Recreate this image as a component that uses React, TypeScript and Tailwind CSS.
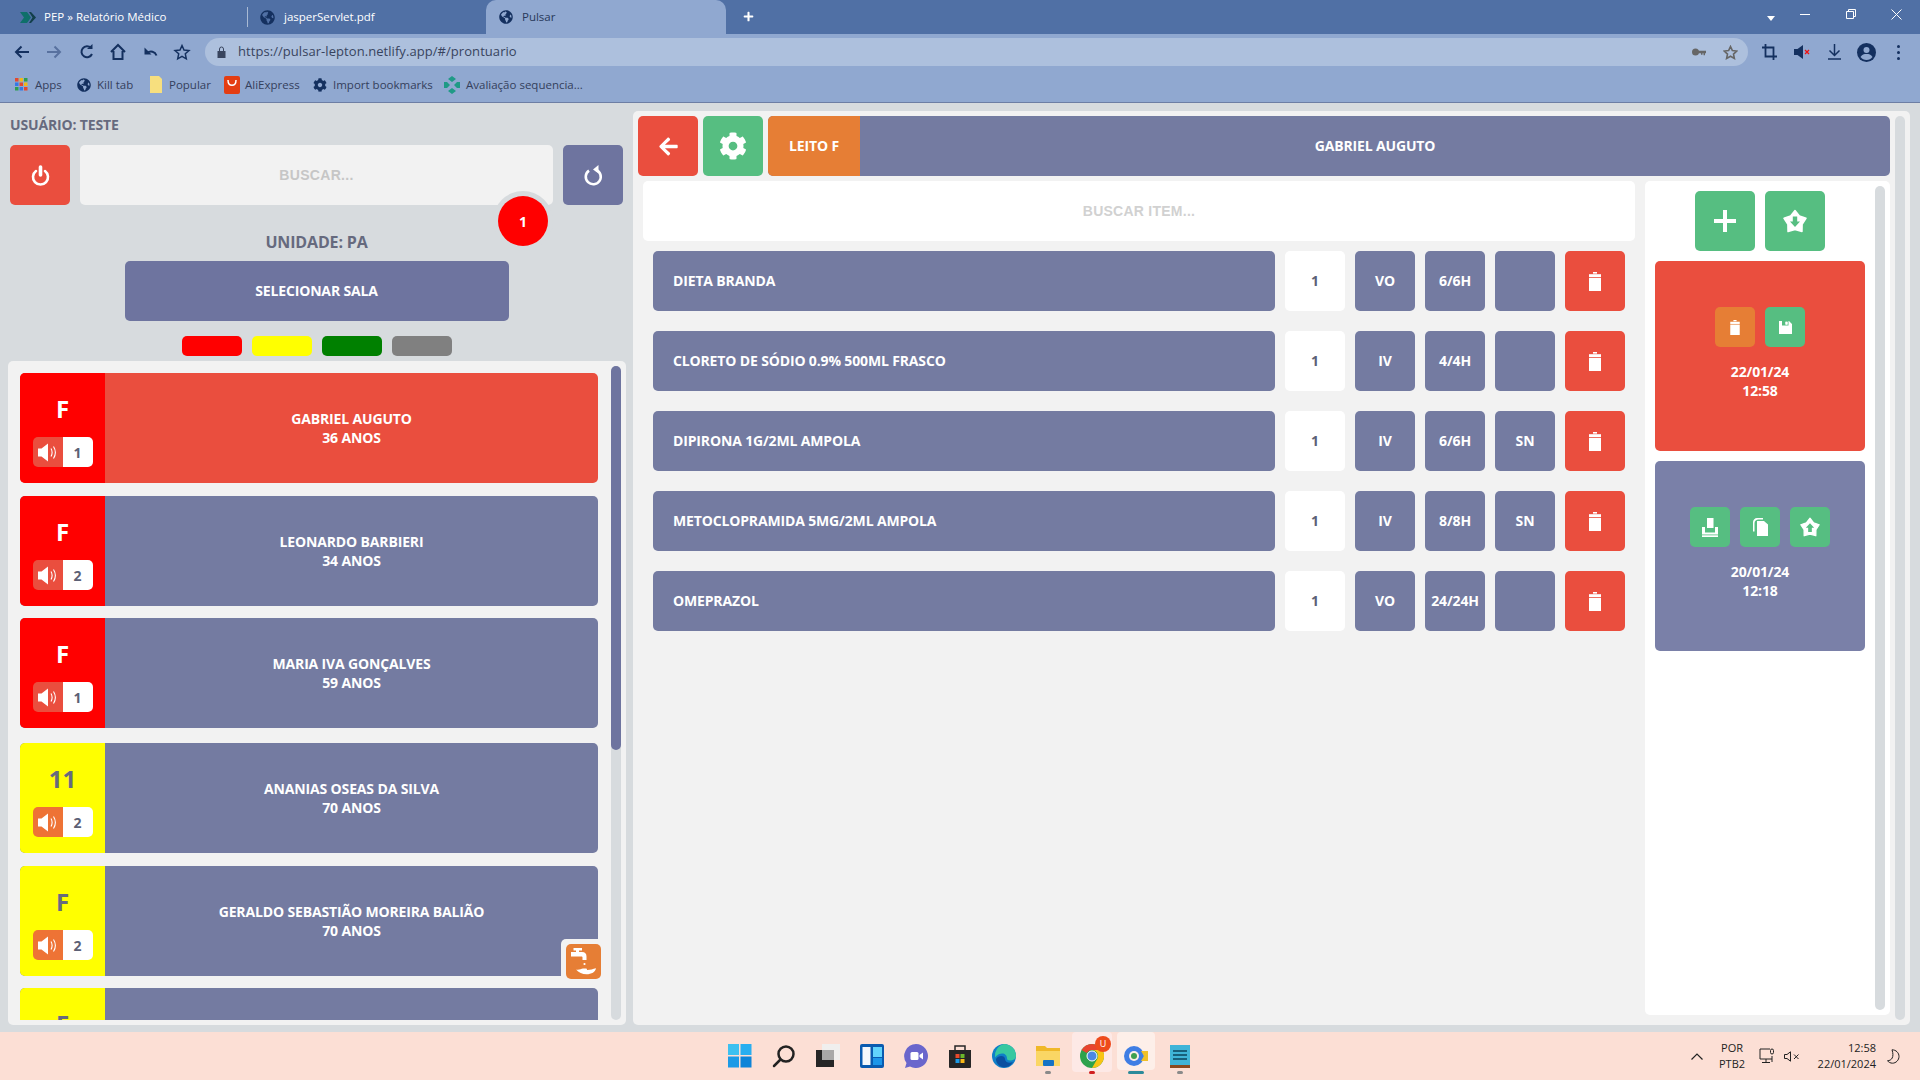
import React from "react";
import { FaArrowLeft, FaCog, FaPlus, FaGlobeAmericas } from "react-icons/fa";

const font = { fontFamily: '"Open Sans", "Noto Sans", sans-serif' };

const Trash = ({ w = 12, h = 19 }: { w?: number; h?: number }) => (
  <svg width={w} height={h} viewBox="0 0 12 19" fill="white">
    <rect x="4" y="0" width="4" height="1.6" />
    <rect x="0" y="2.2" width="12" height="2.8" />
    <rect x="0" y="5.8" width="12" height="13.2" />
  </svg>
);
const Speaker = () => (
  <svg width="19" height="19" viewBox="0 0 19 19" fill="white">
    <path d="M0 5.500h3.500L10 .5v18l-6.500-5H0z" />
    <path d="M13 5.500c1.400 2.500 1.400 5.500 0 8M15.500 3.500c2.200 3.500 2.200 8.500 0 12" fill="none" stroke="white" strokeWidth="1.100" />
  </svg>
);
const StarArrow = ({ up, size = 24, color }: { up?: boolean; size?: number; color: string }) => (
  <svg width={size} height={size} viewBox="0 0 24 24">
    <path d="M12 1.500L16.400 7 23 9.300 19.100 15.300 19 22.500 12 20.500 5 22.500 4.900 15.300 1 9.300 7.600 7z" fill="white" stroke="white" strokeWidth="1.500" strokeLinejoin="round" />
    {up ? <path d="M12 7.500l5 5.500h-2.800v5h-4.400v-5H7z" fill={color} /> : <path d="M9.800 7.500h4.400v5H17l-5 5.500-5-5.500h2.800z" fill={color} />}
  </svg>
);
const Faucet = () => (
  <svg width="35" height="35" viewBox="0 0 35 35" fill="white">
    <path d="M5 8h5V6.500H7.500V4H16v2.500h-3V8h3c3 0 4.500 1.500 4.500 4.500V16h-4v-2.500c0-.6-.4-1-1-1H5z" />
    <circle cx="18.500" cy="20" r="1.100" />
    <path d="M10 25.500c3 1 5-1 7-1h3c1.200 0 1.500 1.200.5 1.500 3 .3 6-.8 9.500-1.700-.5 3.700-4.500 6-9.500 6-4 0-8-1.800-10.500-4.800z" />
  </svg>
);
const Power = () => (
  <svg width="19" height="21" viewBox="0 0 19 21" fill="none" stroke="white" strokeLinecap="round">
    <path d="M9.500 2v8" strokeWidth="3.600" />
    <path d="M5 6a7.500 7.500 0 1 0 9 0" strokeWidth="2.600" />
  </svg>
);
const Refresh = () => (
  <svg width="19" height="21" viewBox="0 0 19 21" fill="none">
    <path d="M5 5.600a7.500 7.500 0 1 0 7-.8" stroke="white" strokeWidth="2.600" />
    <path d="M9 4.500L14.500 0v8.500z" fill="white" />
  </svg>
);
const StampIcon = () => (
  <svg width="16" height="19" viewBox="0 0 16 19" fill="white">
    <rect x="5" y="0" width="6.500" height="10" />
    <path d="M0 9h3v5.500h10V9h3v7.500H0z" />
    <rect x="0" y="17.300" width="16" height="1.700" />
  </svg>
);
const SaveIcon = () => (
  <svg width="13" height="13" viewBox="0 0 13 13" fill="white">
    <path fillRule="evenodd" d="M0 0h10l3 3v10H0zM3 0v4.500h6.500V0zM6.500 .8H8.500v2.800H6.500z" />
    <rect x="6.500" y="0.800" width="2" height="2.800" />
  </svg>
);
const CopyIcon = () => (
  <svg width="15" height="18" viewBox="0 0 15 18" fill="white">
    <path d="M4 0h6v1.500H5.500c-2 0-4 1.500-4 3.500v8.500H0V4c0-2 2-4 4-4z" />
    <path d="M4 3h7l4 3.500V18H4z" />
  </svg>
);

const Globe = ({ x = 15 }: { x?: number }) => <FaGlobeAmericas size={x} color="#14305f" className="shrink-0" />;

function Tabs() {
  return (
    <div className="h-[34px] bg-[#5070a5] flex text-white text-[11.5px] relative" style={font}>
      <div className="w-[247px] flex items-center pl-[20px] shrink-0">
        <svg width="16" height="11" viewBox="0 0 16 11" className="shrink-0">
          <path d="M0 0h7l4 5.500-4 5.500H0l4-5.500z" fill="#0f6f6a" />
          <path d="M9 0h2l5 5.500-5 5.500H9l3.500-5.500z" fill="#123f4a" />
        </svg>
        <span className="ml-[8px]">PEP » Relatório Médico</span>
      </div>
      <div className="w-px h-[20px] bg-[#a9bad4] mt-[7px] shrink-0" />
      <div className="w-[238px] flex items-center pl-[12px] shrink-0">
        <Globe x={15} />
        <span className="ml-[9px]">jasperServlet.pdf</span>
      </div>
      <div className="w-[240px] bg-[#90a8d0] rounded-t-[10px] flex items-center pl-[13px] text-[#28395a] shrink-0">
        <Globe x={14} />
        <span className="ml-[9px]">Pulsar</span>
      </div>
      <div className="w-[44px] flex items-center justify-center pb-[1px]">
        <FaPlus size={11} color="white" />
      </div>
      <div className="flex-1" />
      <div className="w-[160px] flex items-start shrink-0">
        <div className="w-0 h-0 ml-[7px] mt-[16px] border-l-[4px] border-r-[4px] border-t-[5px] border-l-transparent border-r-transparent border-t-white" />
        <div className="w-[10px] h-px bg-white ml-[25px] mt-[14px]" />
        <svg width="10" height="10" viewBox="0 0 10 10" className="ml-[36px] mt-[9px]" fill="none" stroke="white">
          <path d="M.5 2.500h7v7h-7zM2.500 2.500V.5h7v7H7.500" />
        </svg>
        <svg width="11" height="11" viewBox="0 0 11 11" className="ml-[35px] mt-[9px]" stroke="white">
          <path d="M.5.5l10 10M10.500.5l-10 10" />
        </svg>
      </div>
    </div>
  );
}

function Toolbar() {
  const c = "#14305f";
  const sw = 2;
  return (
    <div className="h-[35px] pt-[1px] bg-[#90a8d0] flex items-center">
      <div className="w-[205px] flex items-center shrink-0">
        <svg width="198" height="18" viewBox="0 0 198 18" className="ml-[6px]" fill="none" stroke={c} strokeWidth={sw}>
          <path d="M23 9H10M15.500 3.500L10 9l5.500 5.500" />
          <path d="M41 9h13M48.500 3.500L54 9l-5.500 5.500" stroke="#58719f" />
          <path d="M85 5a5.500 5.500 0 1 0 1 6" />
          <path d="M81 6h5.500V1z" fill={c} stroke="none" />
          <path d="M105 9l7-7 7 7M107.500 8v8h9V8" />
          <path d="M150.500 12.500c-1.500-4-6-5-9.500-2.500" />
          <path d="M138.500 4.500v7h7z" fill={c} stroke="none" />
          <path d="M176 2.500l2 4.500 5 .5-3.700 3.300 1 5-4.300-2.500-4.300 2.500 1-5-3.700-3.300 5-.5z" strokeWidth="1.500" />
        </svg>
      </div>
      <div className="w-[1543px] h-[28px] rounded-full bg-[#adc0dd] flex items-center text-[13px] tracking-[0.06px] text-[#38445e] shrink-0" style={font}>
        <svg width="9" height="12" viewBox="0 0 9 12" className="ml-[12px]" fill="#38445e">
          <path d="M2.500 5V3a2 2 0 0 1 4 0v2" stroke="#38445e" fill="none" />
          <rect x="0.500" y="5" width="8" height="7" />
        </svg>
        <span className="ml-[12px]">https://pulsar-lepton.netlify.app/#/prontuario</span>
        <div className="flex-1" />
        <svg width="14" height="9" viewBox="0 0 14 9" fill="#666">
          <circle cx="3.500" cy="4" r="3.500" />
          <path d="M5 2.800h9v2.400h-1v2h-1.500v-2h-1v1.500H9V5.200H5z" />
        </svg>
        <svg width="15" height="15" viewBox="0 0 24 24" className="ml-[17px] mr-[10px]" fill="none" stroke="#666" strokeWidth="2.600">
          <path d="M12 2.500l3 6.400 7 .8-5.200 4.800 1.400 7-6.200-3.500-6.200 3.500 1.400-7L2 9.700l7-.8z" />
        </svg>
      </div>
      <div className="flex-1 flex items-center pl-[14px]">
        <svg width="15" height="16" viewBox="0 0 15 16" fill="none" stroke={c} strokeWidth="1.800" className="shrink-0">
          <path d="M3.500 0v12.500H15M0 3.500h11.500V16" />
        </svg>
        <svg width="17" height="14" viewBox="0 0 17 14" className="ml-[17px] shrink-0">
          <path d="M0 4h3.500L9 0v14l-5.500-4H0z" fill={c} />
          <path d="M11 5l4 4M15 5l-4 4" stroke="#f01010" strokeWidth="1.300" />
        </svg>
        <svg width="13" height="16" viewBox="0 0 13 16" className="ml-[17px] shrink-0" fill="none" stroke={c} strokeWidth="1.500">
          <path d="M6.500 0v11M1.500 6.500l5 5 5-5M0 15h13" />
        </svg>
        <svg width="19" height="19" viewBox="0 0 19 19" className="ml-[16px] shrink-0">
          <circle cx="9.500" cy="9.500" r="9.500" fill={c} />
          <circle cx="9.500" cy="7" r="3" fill="#90a8d0" />
          <path d="M3.500 14c1.500-2.500 3.500-3 6-3s4.500.5 6 3c-1.500 2-3.500 3-6 3s-4.500-1-6-3z" fill="#90a8d0" />
        </svg>
        <div className="ml-[21px] flex flex-col gap-[3px] shrink-0">
          <div className="w-[3px] h-[3px] rounded-full bg-[#14305f]" />
          <div className="w-[3px] h-[3px] rounded-full bg-[#14305f]" />
          <div className="w-[3px] h-[3px] rounded-full bg-[#14305f]" />
        </div>
      </div>
    </div>
  );
}

function Bookmarks() {
  return (
    <div className="h-[34px] bg-[#90a8d0] border-b border-[#6d7ea4] flex items-center text-[11.5px] text-[#34405c] pb-[2px] pl-[15px]" style={font}>
      <div className="w-[62px] flex items-center gap-[7px] shrink-0">
        <svg width="13" height="13" viewBox="0 0 13 13" className="shrink-0">
          {[0, 1, 2].map((r) =>
            [0, 1, 2].map((q) => (
              <rect key={`${r}${q}`} x={q * 4.5} y={r * 4.5} width="3.500" height="3.500" fill={["#e2492f", "#f0b818", "#2e9e50", "#3578e5", "#e2492f", "#f0b818", "#2e9e50", "#3578e5", "#e2492f"][r * 3 + q]} />
            ))
          )}
        </svg>
        <span>Apps</span>
      </div>
      <div className="w-[73px] flex items-center gap-[6px] shrink-0">
        <Globe x={14} />
        <span>Kill tab</span>
      </div>
      <div className="w-[74px] flex items-center gap-[7px] shrink-0">
        <svg width="12" height="17" viewBox="0 0 12 17" className="shrink-0">
          <path d="M0 0h9l3 3v14H0z" fill="#f7df7e" />
        </svg>
        <span>Popular</span>
      </div>
      <div className="w-[89px] flex items-center gap-[5px] shrink-0">
        <svg width="16" height="18" viewBox="0 0 16 18" className="shrink-0">
          <rect width="16" height="18" rx="2" fill="#e43d12" />
          <path d="M4 4c0 7 8 7 8 0" fill="none" stroke="white" strokeWidth="1.500" />
        </svg>
        <span>AliExpress</span>
      </div>
      <div className="w-[131px] flex items-center gap-[6px] shrink-0">
        <FaCog size={14} color="#14305f" />
        <span>Import bookmarks</span>
      </div>
      <div className="flex items-center gap-[6px] shrink-0">
        <svg width="16" height="18" viewBox="0 0 16 18" className="shrink-0" fill="#1f9a86">
          <path d="M8 0l4 3-4 3-4-3zM8 12l4 3-4 3-4-3zM0 6l3 0 3 3-3 3H0zM16 6h-3l-3 3 3 3h3z" />
        </svg>
        <span>Avaliação sequencia...</span>
      </div>
    </div>
  );
}

type P = { name: string; age: string; code: string; n: string; color: string; mt: string; active?: boolean; water?: boolean; dark: boolean; clip?: boolean };

const patients: P[] = [
  { name: "GABRIEL AUGUTO", age: "36 ANOS", code: "F", n: "1", color: "bg-[#ff0000]", mt: "mt-0", active: true, dark: false },
  { name: "LEONARDO BARBIERI", age: "34 ANOS", code: "F", n: "2", color: "bg-[#ff0000]", mt: "mt-[13px]", dark: false },
  { name: "MARIA IVA GONÇALVES", age: "59 ANOS", code: "F", n: "1", color: "bg-[#ff0000]", mt: "mt-[12px]", dark: false },
  { name: "ANANIAS OSEAS DA SILVA", age: "70 ANOS", code: "11", n: "2", color: "bg-[#ffff00]", mt: "mt-[15px]", dark: true },
  { name: "GERALDO SEBASTIÃO MOREIRA BALIÃO", age: "70 ANOS", code: "F", n: "2", color: "bg-[#ffff00]", mt: "mt-[13px]", water: true, dark: true },
  { name: "", age: "", code: "F", n: "", color: "bg-[#ffff00]", mt: "mt-[12px]", dark: true, clip: true },
];

function PatientCard({ p }: { p: P }) {
  return (
    <div className={`relative flex h-[110px] w-[578px] shrink-0 rounded-[5px] ${p.mt} ${p.active ? "bg-[#ea4e3e]" : "bg-[#747ba1]"}`}>
      <div className={`w-[85px] shrink-0 rounded-l-[5px] flex flex-col items-center ${p.color}`}>
        <div className={`h-[24px] mt-[24px] flex items-center text-[24px] font-bold ${p.dark ? "text-[#666a7e]" : "text-white"}`}>{p.code}</div>
        {!p.clip && (
          <div className="flex w-[60px] h-[30px] mt-[16px] rounded-[5px] overflow-hidden">
            <div className={`w-[30px] flex items-center justify-center ${p.dark ? "bg-[#ee7335]" : "bg-[#ea4e3e]"}`}>
              <Speaker />
            </div>
            <div className="w-[30px] bg-white flex items-center justify-center text-[14px] font-bold text-[#5c6075]">{p.n}</div>
          </div>
        )}
      </div>
      <div className="flex-1 flex flex-col items-center justify-center text-white text-[14px] font-bold leading-[19px] tracking-[-0.15px]">
        <span>{p.name}</span>
        <span>{p.age}</span>
      </div>
      {p.water && (
        <div className="absolute left-[541px] top-[73px] pl-[5px] pt-[5px] bg-[#f2f2f2] rounded-tl-[5px]">
          <div className="w-[35px] h-[35px] rounded-[5px] bg-[#e67e35]">
            <Faucet />
          </div>
        </div>
      )}
    </div>
  );
}

function LeftColumn() {
  return (
    <div className="w-[633px] shrink-0 pl-[8px] flex flex-col h-[922px]">
      <div className="w-[613px] ml-[2px] flex flex-col items-stretch tracking-[-0.15px]">
        <div className="h-[42px] flex items-center text-[14px] font-bold text-[#666a7e]">USUÁRIO: TESTE</div>
        <div className="relative flex gap-[10px] h-[60px]">
          <div className="w-[60px] rounded-[5px] bg-[#ea4e3e] flex items-center justify-center"><Power /></div>
          <div className="flex-1 rounded-[5px] bg-[#f2f2f2] flex items-center justify-center text-[14px] font-bold text-[#c6c6c6] tracking-[0.3px]" style={{ fontFamily: '"Liberation Sans", sans-serif' }}>BUSCAR...</div>
          <div className="w-[60px] rounded-[5px] bg-[#6e749f] flex items-center justify-center"><Refresh /></div>
          <div className="absolute left-[483px] top-[46px] w-[60px] h-[60px] rounded-full bg-[#d7dbde] flex items-center justify-center">
            <div className="w-[50px] h-[50px] rounded-full bg-[#ff0000] flex items-center justify-center text-white text-[14px] font-bold">1</div>
          </div>
        </div>
        <div className="h-[56px] pt-[24px] text-center text-[16px] leading-[26px] font-bold text-[#666a7e]">UNIDADE: PA</div>
        <div className="h-[60px] w-[384px] mx-auto rounded-[5px] bg-[#6e749f] flex items-center justify-center text-white text-[14px] font-bold pb-[1px]">SELECIONAR SALA</div>
        <div className="flex justify-center gap-[10px] mt-[15px]">
          <div className="w-[60px] h-[20px] rounded-[5px] bg-[#ff0000]" />
          <div className="w-[60px] h-[20px] rounded-[5px] bg-[#ffff00]" />
          <div className="w-[60px] h-[20px] rounded-[5px] bg-[#008000]" />
          <div className="w-[60px] h-[20px] rounded-[5px] bg-[#808080]" />
        </div>
      </div>
      <div className="mt-[5px] w-[618px] h-[664px] rounded-[5px] bg-[#f2f2f2] flex p-[5px] gap-[6px]">
        <div className="flex-1 h-[654px] overflow-hidden pl-[7px] pt-[7px] flex flex-col">
          {patients.map((p, i) => <PatientCard key={i} p={p} />)}
        </div>
        <div className="w-[10px] h-[654px] rounded-[5px] bg-[#d7dbde] shrink-0">
          <div className="w-[10px] h-[384px] rounded-[5px] bg-[#6e749f]" />
        </div>
      </div>
    </div>
  );
}

const rows = [
  ["DIETA BRANDA", "VO", "6/6H", ""],
  ["CLORETO DE SÓDIO 0.9% 500ML FRASCO", "IV", "4/4H", ""],
  ["DIPIRONA 1G/2ML AMPOLA", "IV", "6/6H", "SN"],
  ["METOCLOPRAMIDA 5MG/2ML AMPOLA", "IV", "8/8H", "SN"],
  ["OMEPRAZOL", "VO", "24/24H", ""],
];
const Cell = ({ children }: { children?: React.ReactNode }) => (
  <div className="w-[60px] rounded-[5px] bg-[#747ba1] flex items-center justify-center pb-[1px]">{children}</div>
);

function RightPanel() {
  return (
    <div className="w-[1277px] h-[914px] mt-[8px] rounded-[5px] bg-[#f2f2f2] flex p-[5px] gap-[5px] shrink-0 text-[14px] font-bold text-white tracking-[-0.15px]">
      <div className="w-[1252px] flex flex-col">
        <div className="flex gap-[5px] h-[60px]">
          <div className="w-[60px] rounded-[5px] bg-[#ea4e3e] flex items-center justify-center"><FaArrowLeft size={21} /></div>
          <div className="w-[60px] rounded-[5px] bg-[#56be81] flex items-center justify-center"><FaCog size={28} /></div>
          <div className="flex-1 flex rounded-[5px] overflow-hidden bg-[#747ba1]">
            <div className="w-[92px] bg-[#e67e35] flex items-center justify-center pb-[1px]">LEITO F</div>
            <div className="flex-1 flex items-center justify-center pb-[1px]">GABRIEL AUGUTO</div>
          </div>
        </div>
        <div className="flex mt-[5px] pl-[5px] gap-[10px]">
          <div className="w-[992px]">
            <div className="h-[60px] rounded-[5px] bg-white flex items-center justify-center text-[#d1d1d1] tracking-[0.25px]" style={{ fontFamily: '"Liberation Sans", sans-serif' }}>BUSCAR ITEM...</div>
            <div className="mt-[10px] px-[10px] flex flex-col gap-[20px]">
              {rows.map((r) => (
                <div key={r[0]} className="flex h-[60px] gap-[10px]">
                  <div className="w-[622px] rounded-[5px] bg-[#747ba1] flex items-center pl-[20px] pb-[1px]">{r[0]}</div>
                  <div className="w-[60px] rounded-[5px] bg-white flex items-center justify-center text-[#5c6075] pb-[1px]">1</div>
                  <Cell>{r[1]}</Cell>
                  <Cell>{r[2]}</Cell>
                  <Cell>{r[3]}</Cell>
                  <div className="w-[60px] rounded-[5px] bg-[#ea4e3e] flex items-center justify-center"><Trash /></div>
                </div>
              ))}
            </div>
          </div>
          <div className="w-[245px] h-[834px] rounded-[5px] bg-white flex pt-[5px] pr-[5px]">
            <div className="w-[230px] flex flex-col items-center pt-[5px]">
              <div className="flex gap-[10px]">
                <div className="w-[60px] h-[60px] rounded-[5px] bg-[#56be81] flex items-center justify-center">
                  <svg width="22" height="22" viewBox="0 0 22 22" fill="white"><path d="M9 0h4v9h9v4h-9v9H9v-9H0V9h9z" /></svg>
                </div>
                <div className="w-[60px] h-[60px] rounded-[5px] bg-[#56be81] flex items-center justify-center"><StarArrow color="#56be81" /></div>
              </div>
              <div className="mt-[10px] w-[210px] h-[190px] rounded-[5px] bg-[#ea4e3e] flex flex-col items-center pt-[46px]">
                <div className="flex gap-[10px]">
                  <div className="w-[40px] h-[40px] rounded-[5px] bg-[#e67e35] flex items-center justify-center"><Trash w={10} h={15} /></div>
                  <div className="w-[40px] h-[40px] rounded-[5px] bg-[#56be81] flex items-center justify-center"><SaveIcon /></div>
                </div>
                <div className="mt-[15px] leading-[19px] text-center">22/01/24<br />12:58</div>
              </div>
              <div className="mt-[10px] w-[210px] h-[190px] rounded-[5px] bg-[#7a80a8] flex flex-col items-center pt-[46px]">
                <div className="flex gap-[10px]">
                  <div className="w-[40px] h-[40px] rounded-[5px] bg-[#56be81] flex items-center justify-center"><StampIcon /></div>
                  <div className="w-[40px] h-[40px] rounded-[5px] bg-[#56be81] flex items-center justify-center"><CopyIcon /></div>
                  <div className="w-[40px] h-[40px] rounded-[5px] bg-[#56be81] flex items-center justify-center"><StarArrow up size={20} color="#56be81" /></div>
                </div>
                <div className="mt-[15px] leading-[19px] text-center">20/01/24<br />12:18</div>
              </div>
            </div>
            <div className="w-[10px] h-[824px] rounded-[5px] bg-[#d7dbde] shrink-0" />
          </div>
        </div>
      </div>
      <div className="w-[10px] h-[904px] rounded-[5px] bg-[#d7dbde] shrink-0" />
    </div>
  );
}

function Taskbar() {
  return (
    <div className="h-[48px] bg-[#fcdfd5] flex items-center relative" style={font}>
      <div className="w-[1660px] shrink-0 pl-[718px] flex items-center">
        <div className="w-[44px] flex justify-center">
          <svg width="24" height="24" viewBox="0 0 24 24"><rect width="11" height="11" fill="#3cc0f0" /><rect x="12.500" width="11" height="11" fill="#28aef0" /><rect y="12.500" width="11" height="11" fill="#1c9ae6" /><rect x="12.500" y="12.500" width="11" height="11" fill="#0d84d8" /></svg>
        </div>
        <div className="w-[44px] flex justify-center">
          <svg width="24" height="24" viewBox="0 0 24 24" fill="none" stroke="#222" strokeWidth="2.500"><circle cx="14" cy="10" r="7.500" /><path d="M8.500 15.500L2 22" strokeLinecap="round" /></svg>
        </div>
        <div className="w-[44px] flex justify-center">
          <svg width="24" height="24" viewBox="0 0 24 24"><rect x="6" y="0" width="18" height="16" fill="#f0efee" /><rect x="0" y="6" width="18" height="17" fill="#262626" /><rect x="6" y="6" width="12" height="10" fill="#a8a8a8" /></svg>
        </div>
        <div className="w-[44px] flex justify-center">
          <svg width="24" height="24" viewBox="0 0 24 24"><rect width="24" height="24" rx="2" fill="#0a5bb0" /><rect x="2.500" y="3" width="8" height="18" fill="#f4f8fc" /><rect x="13" y="3" width="9" height="10" fill="#62d4fc" /><rect x="13" y="14" width="9" height="7" fill="#1c96ea" /></svg>
        </div>
        <div className="w-[44px] flex justify-center">
          <svg width="24" height="24" viewBox="0 0 24 24"><path d="M12 0a12 12 0 1 1-6 22.400L1 24l1.500-5A12 12 0 0 1 12 0z" fill="#6a66cc" /><rect x="6.500" y="8" width="8" height="8" rx="1.500" fill="white" /><path d="M15.500 11l3.500-2.500v7L15.500 13z" fill="white" /></svg>
        </div>
        <div className="w-[44px] flex justify-center">
          <svg width="24" height="24" viewBox="0 0 24 24"><path d="M1 6h22v17a1 1 0 0 1-1 1H2a1 1 0 0 1-1-1z" fill="#262626" /><path d="M7 6V2h10v4" fill="none" stroke="#262626" strokeWidth="1.500" /><rect x="7.500" y="10" width="4" height="4" fill="#e8492c" /><rect x="12.500" y="10" width="4" height="4" fill="#6cb82c" /><rect x="7.500" y="15" width="4" height="4" fill="#1c9ae6" /><rect x="12.500" y="15" width="4" height="4" fill="#f8b818" /></svg>
        </div>
        <div className="w-[44px] flex justify-center">
          <svg width="24" height="24" viewBox="0 0 24 24"><circle cx="12" cy="12" r="12" fill="#0f7fc8" /><path d="M12 0a12 12 0 0 1 12 12c0 3-3 4.500-6 4.500-2 0-3-.8-3-2 0-3-2-5-5-5-4 0-6 3-7 4A12 12 0 0 1 12 0z" fill="#38c8a0" /><path d="M4 15c2-4 9-4 9 0 0 3 4 5 8 3-3 5-8 6-11 5-3-1-6-4-6-8z" fill="#0a4fa0" /></svg>
        </div>
        <div className="w-[44px] flex flex-col items-center relative">
          <svg width="24" height="24" viewBox="0 0 24 24"><path d="M0 2h9l2 2h13v18H0z" fill="#f0b828" /><rect y="7" width="24" height="15" fill="#fad664" /><rect x="7" y="16" width="11" height="6" rx="1" fill="#1673c4" /></svg>
          <div className="absolute top-[27px] w-[6px] h-[3px] rounded-full bg-[#8a8a8a]" />
        </div>
        <div className="w-[44px] flex flex-col items-center relative">
          <div className="absolute -top-[12px] w-[40px] h-[40px] rounded-[4px] bg-[#fde9e6]" />
          <svg width="24" height="24" viewBox="0 0 24 24" className="relative"><circle cx="12" cy="12" r="12" fill="#2ea24c" /><path d="M12 0a12 12 0 0 1 10.400 6H12a6 6 0 0 0-5.200 3L1.600 6A12 12 0 0 1 12 0z" fill="#e8432f" /><path d="M22.400 6A12 12 0 0 1 12 24l5.200-9A6 6 0 0 0 12 6z" fill="#f8c414" /><circle cx="12" cy="12" r="5" fill="#4a88e4" stroke="white" /></svg>
          <div className="absolute -top-[8px] left-[25px] w-[16px] h-[16px] rounded-full bg-[#ee4a1c] text-white text-[9px] flex items-center justify-center">U</div>
          <div className="absolute top-[27px] w-[6px] h-[3px] rounded-full bg-[#d02020]" />
        </div>
        <div className="w-[44px] flex flex-col items-center relative">
          <div className="absolute -top-[12px] w-[38px] h-[38px] rounded-[4px] bg-[#fdefe9]" />
          <svg width="24" height="24" viewBox="0 0 24 24" className="relative"><circle cx="10" cy="12" r="10" fill="#3f7ee4" /><circle cx="10" cy="12" r="5" fill="#fbeee8" /><circle cx="10" cy="12" r="3" fill="#3fa050" /><path d="M17 7l7 0v10h-7l3-5z" fill="#f0c028" /></svg>
          <div className="absolute top-[27px] w-[16px] h-[3px] rounded-full bg-[#2b8a9a]" />
        </div>
        <div className="w-[44px] flex flex-col items-center relative">
          <svg width="20" height="24" viewBox="0 0 20 24"><rect width="20" height="21" y="1" fill="#3fb4d8" /><rect y="21" width="20" height="3" fill="#8a4a20" /><rect x="3" y="6" width="14" height="2" fill="#17607c" /><rect x="3" y="10" width="14" height="2" fill="#17607c" /><rect x="3" y="14" width="14" height="2" fill="#17607c" /></svg>
          <div className="absolute top-[27px] w-[6px] h-[3px] rounded-full bg-[#8a8a8a]" />
        </div>
      </div>
      <div className="flex items-center text-[11px] text-[#222] leading-[16px]">
        <svg width="12" height="7" viewBox="0 0 12 7" fill="none" stroke="#222" strokeWidth="1.200" className="ml-[31px] shrink-0"><path d="M.5 6.500L6 1l5.500 5.500" /></svg>
        <div className="w-[44px] ml-[7px] text-center shrink-0">POR<br />PTB2</div>
        <svg width="17" height="16" viewBox="0 0 17 16" fill="none" stroke="#222" className="ml-[5px] shrink-0"><path d="M11 1H1v10h12M7 11v3.500M3 14.500h8M13 8v6" /><rect x="11.500" y="1" width="3" height="5" rx="1.500" /></svg>
        <svg width="16" height="11" viewBox="0 0 16 11" fill="none" stroke="#222" className="ml-[8px] shrink-0"><path d="M.5 3.500h2.500L6.500.8v9.400L3 7.500H.5zM10 3.500l4.500 4.500M14.500 3.500L10 8" /></svg>
        <div className="w-[75px] ml-[1px] text-right shrink-0">12:58<br />22/01/2024</div>
        <svg width="13" height="15" viewBox="0 0 13 15" fill="none" stroke="#222" className="ml-[11px] shrink-0"><path d="M5 .8c4 0 7 3 7 6.700 0 3.500-3 6.700-6.500 6.700-2 0-4-1-5-2.500 4 0 7-3.500 4.500-10.900z" /></svg>
      </div>
    </div>
  );
}

export default function App() {
  return (
    <div className="w-[1920px] h-[1080px] overflow-hidden flex flex-col bg-[#d7dbde]" style={font}>
      <Tabs />
      <Toolbar />
      <Bookmarks />
      <div className="h-[929px] flex bg-[#d7dbde]">
        <LeftColumn />
        <RightPanel />
      </div>
      <Taskbar />
    </div>
  );
}
